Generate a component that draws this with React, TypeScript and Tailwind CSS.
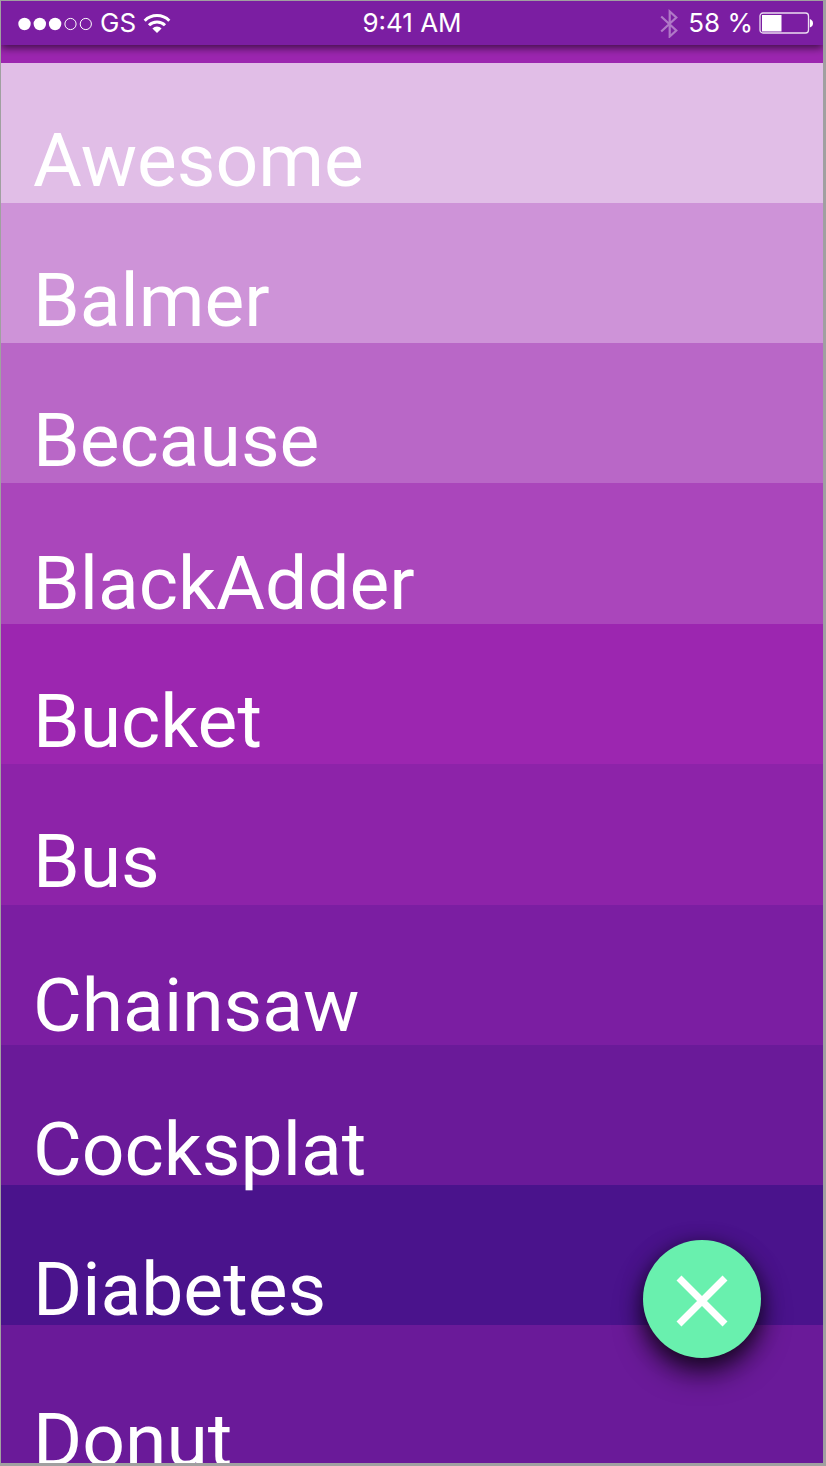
const words = [
  { name: 'Awesome', row: 'h-[140px] bg-[#e1bee7] pt-[53px]' },
  { name: 'Balmer', row: 'h-[140px] bg-[#ce93d8] pt-[53px]' },
  { name: 'Because', row: 'h-[140px] bg-[#b967c7] pt-[53px]' },
  { name: 'BlackAdder', row: 'h-[141px] bg-[#aa46bb] pt-14' },
  { name: 'Bucket', row: 'h-[140px] bg-[#9c26b0] pt-[53px]' },
  { name: 'Bus', row: 'h-[141px] bg-[#8d23a9] pt-[53px]' },
  { name: 'Chainsaw', row: 'h-[140px] bg-[#7b1ea2] pt-14' },
  { name: 'Cocksplat', row: 'h-[140px] bg-[#6a1a99] pt-15' },
  { name: 'Diabetes', row: 'h-[140px] bg-[#4a138c] pt-15' },
  { name: 'Donut', row: 'h-[138px] bg-[#6a1a99] pt-[71px]' },
];

function Signal() {
  return (
    <svg viewBox="0 0 76 16" className="h-4 w-[76px]" fill="white" stroke="white" role="img" aria-label="Signal: 3 of 5">
      <circle cx="7.5" cy="9" r="6.2" stroke="none" />
      <circle cx="22.8" cy="9" r="6.2" stroke="none" />
      <circle cx="38.1" cy="9" r="6.2" stroke="none" />
      <circle cx="53.5" cy="9" r="5.6" fill="none" />
      <circle cx="68.8" cy="9" r="5.6" fill="none" />
    </svg>
  );
}

function Wifi() {
  return (
    <svg viewBox="0 0 28 20" className="h-5 w-7" fill="none" stroke="white" strokeWidth="3" role="img" aria-label="Wi-Fi">
      <path d="M1.7 7.7a17.4 17.4 0 0 1 24.6 0" />
      <path d="M6 12.2a11.3 11.3 0 0 1 16 0" />
      <path d="M14 20l-4.6-4.5a6.5 6.5 0 0 1 9.2 0z" fill="white" stroke="none" />
    </svg>
  );
}

function Bluetooth() {
  return (
    <svg viewBox="0 0 18 30" className="h-[30px] w-[18px] opacity-40" fill="none" stroke="white" strokeWidth="2.2" role="img" aria-label="Bluetooth">
      <path d="M1.2 8.5L16.3 22.5L9.7 28.5V3.5l6.6 6L1.2 23.5" />
    </svg>
  );
}

function Battery() {
  return (
    <svg viewBox="0 0 55 22" className="h-[22px] w-[55px]" role="img" aria-label="Battery">
      <rect x="1" y="1" width="48.5" height="20" rx="3" fill="none" stroke="white" strokeOpacity="0.85" strokeWidth="1.3" />
      <rect x="3" y="3" width="19.5" height="16.5" fill="white" />
      <path d="M50.8 7q3.2 1.2 3.2 4.3t-3.2 4.3z" fill="white" />
    </svg>
  );
}

export default function App() {
  return (
    <div className="border-t border-r-3 border-b-3 border-l border-[#a0a0a0] bg-[#9c26b0] font-['Roboto',sans-serif] text-white">
      <main className="relative overflow-hidden">
        <header className="grid h-11 grid-cols-[1fr_auto_1fr] items-center bg-[#7b1ea2] px-[9px] font-['Inter',sans-serif] text-[26px] leading-8 shadow-[0_3px_8px_rgba(0,0,0,0.6)]">
          <div className="flex items-center gap-[7px] pl-[7px]">
            <Signal />
            <span>GS</span>
            <Wifi />
          </div>
          <time>9:41 AM</time>
          <div className="flex items-center justify-end gap-[6px]">
            <Bluetooth />
            <span className="pl-1">58 %</span>
            <Battery />
          </div>
        </header>
        <ul className="mt-[18px]">
          {words.map((word) => (
            <li key={word.name} className={`pl-8 text-[75px] leading-[88px] ${word.row}`}>
              {word.name}
            </li>
          ))}
        </ul>
        <button
          type="button"
          aria-label="Close"
          className="absolute right-[62px] bottom-[105px] flex size-[118px] items-center justify-center rounded-full bg-[#69f0ae] pt-1 shadow-[0_16px_28px_rgba(0,0,0,0.6),0_4px_20px_rgba(0,0,0,0.5)]"
        >
          <svg viewBox="0 0 52 52" className="size-[52px]" stroke="white" strokeWidth="7" aria-hidden="true">
            <path d="M3 3l46 46M49 3L3 49" />
          </svg>
        </button>
      </main>
    </div>
  );
}
